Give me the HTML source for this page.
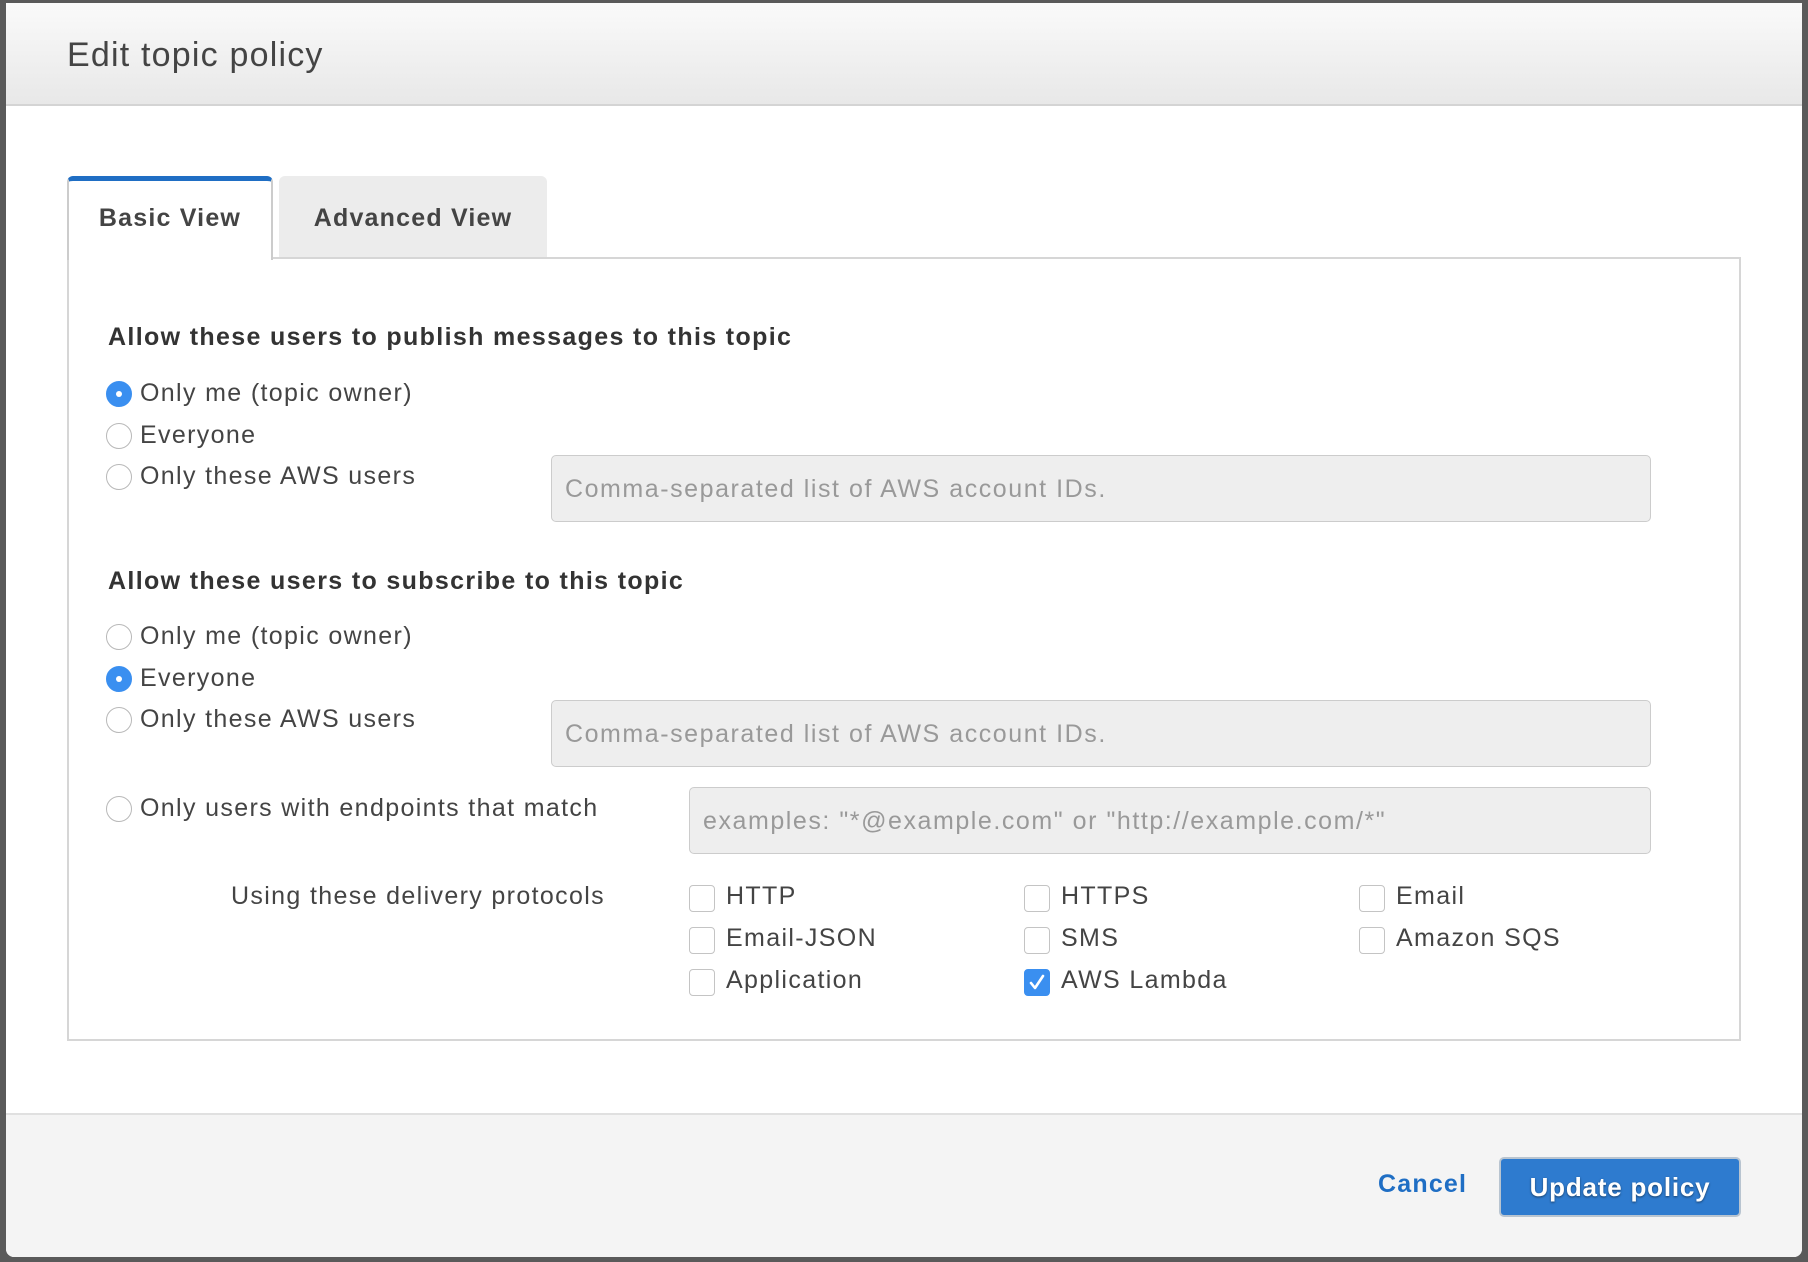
<!DOCTYPE html>
<html><head><meta charset="utf-8"><style>
*{margin:0;padding:0;box-sizing:border-box}
body{width:1808px;height:1262px;background:#5a5a5a;font-family:"Liberation Sans",Arial,sans-serif;color:#444;position:relative;overflow:hidden}
.dlg{position:absolute;left:6px;top:3px;width:1796px;height:1254px;background:#fff;border-radius:0 0 8px 8px;overflow:hidden}
.hdr{position:absolute;left:0;top:0;width:100%;height:103px;background:linear-gradient(#fafafa,#e8e8e8);border-bottom:2px solid #d4d4d4}
.hdr span{position:absolute;left:61px;top:33px;font-size:34px;color:#444;letter-spacing:1.2px}
.a{position:absolute}
.tab{position:absolute;top:173px;height:81px;font-weight:bold;font-size:25px;color:#444;text-align:center;line-height:84px;border-radius:6px 6px 0 0;letter-spacing:1.2px}
.panel{position:absolute;left:61px;top:254px;width:1674px;height:784px;border:2px solid #d6d6d6}
.h{position:absolute;left:102px;font-weight:bold;font-size:25px;color:#333;letter-spacing:1.35px}
.r{position:absolute;left:100px;width:26px;height:26px;border-radius:50%;border:1.5px solid #b8b8b8;background:#fff}
.r.on{background:#3a8ff0;border-color:#3a8ff0}
.r.on::after{content:"";position:absolute;left:8.5px;top:8.5px;width:6px;height:6px;border-radius:50%;background:#fff}
.l{position:absolute;font-size:25px;color:#444;line-height:30px;letter-spacing:1.35px}
.in{position:absolute;background:#eee;border:1.5px solid #ccc;border-radius:5px;font-size:25px;color:#999;padding-left:13px;letter-spacing:1.55px}
.cb{position:absolute;width:26px;height:27px;border:1.5px solid #c4c4c4;border-radius:4px;background:#fff}
.cb.on{background:#3a8ff0;border-color:#3a8ff0}
.ft{position:absolute;left:0;top:1110px;width:100%;height:150px;background:#f4f4f4;border-top:2px solid #e0e0e0}
</style></head><body>
<div class="dlg">
<div class="hdr"><span>Edit topic policy</span></div>
<div class="panel"></div>
<div class="tab" style="left:61px;width:206px;background:#fff;border:2px solid #ccc;border-bottom:none;border-top:5px solid #1f6ec4;height:84px;line-height:74px">Basic View</div>
<div class="tab" style="left:273px;width:268px;background:#ececec">Advanced View</div>

<div class="h" style="top:320px">Allow these users to publish messages to this topic</div>
<div class="r on" style="top:378px"></div><div class="l" style="left:134px;top:375px">Only me (topic owner)</div>
<div class="r" style="top:420px"></div><div class="l" style="left:134px;top:417px">Everyone</div>
<div class="r" style="top:461px"></div><div class="l" style="left:134px;top:458px">Only these AWS users</div>
<div class="in" style="left:545px;top:452px;width:1100px;height:67px;line-height:66px">Comma-separated list of AWS account IDs.</div>

<div class="h" style="top:564px">Allow these users to subscribe to this topic</div>
<div class="r" style="top:621px"></div><div class="l" style="left:134px;top:618px">Only me (topic owner)</div>
<div class="r on" style="top:663px"></div><div class="l" style="left:134px;top:660px">Everyone</div>
<div class="r" style="top:704px"></div><div class="l" style="left:134px;top:701px">Only these AWS users</div>
<div class="in" style="left:545px;top:697px;width:1100px;height:67px;line-height:66px">Comma-separated list of AWS account IDs.</div>
<div class="r" style="top:793px"></div><div class="l" style="left:134px;top:790px">Only users with endpoints that match</div>
<div class="in" style="left:683px;top:784px;width:962px;height:67px;line-height:66px">examples: "*@example.com" or "http://example.com/*"</div>

<div class="l" style="left:225px;top:878px">Using these delivery protocols</div>
<div class="cb" style="left:683px;top:882px"></div><div class="l" style="left:720px;top:878px">HTTP</div>
<div class="cb" style="left:1018px;top:882px"></div><div class="l" style="left:1055px;top:878px">HTTPS</div>
<div class="cb" style="left:1353px;top:882px"></div><div class="l" style="left:1390px;top:878px">Email</div>
<div class="cb" style="left:683px;top:924px"></div><div class="l" style="left:720px;top:920px">Email-JSON</div>
<div class="cb" style="left:1018px;top:924px"></div><div class="l" style="left:1055px;top:920px">SMS</div>
<div class="cb" style="left:1353px;top:924px"></div><div class="l" style="left:1390px;top:920px">Amazon SQS</div>
<div class="cb" style="left:683px;top:966px"></div><div class="l" style="left:720px;top:962px">Application</div>
<div class="cb on" style="left:1018px;top:966px"><svg width="26" height="27" viewBox="0 0 26 27" style="position:absolute;left:-1.5px;top:-1.5px"><path d="M7 14 L11 19 L19 7" fill="none" stroke="#fff" stroke-width="2.6" stroke-linecap="round" stroke-linejoin="round"/></svg></div><div class="l" style="left:1055px;top:962px">AWS Lambda</div>

<div class="ft">
<div class="a" style="left:1372px;top:55px;font-size:25px;font-weight:bold;color:#1f6ec4;letter-spacing:1.2px">Cancel</div>
<div class="a" style="left:1493px;top:42px;width:242px;height:60px;background:#2e7bcf;border:2px solid #b8c4d0;border-radius:5px;color:#fff;font-weight:bold;font-size:26px;text-align:center;line-height:56px;text-shadow:0 1px 2px rgba(0,0,0,.5);letter-spacing:0.8px">Update policy</div>
</div>
</div>
</body></html>
